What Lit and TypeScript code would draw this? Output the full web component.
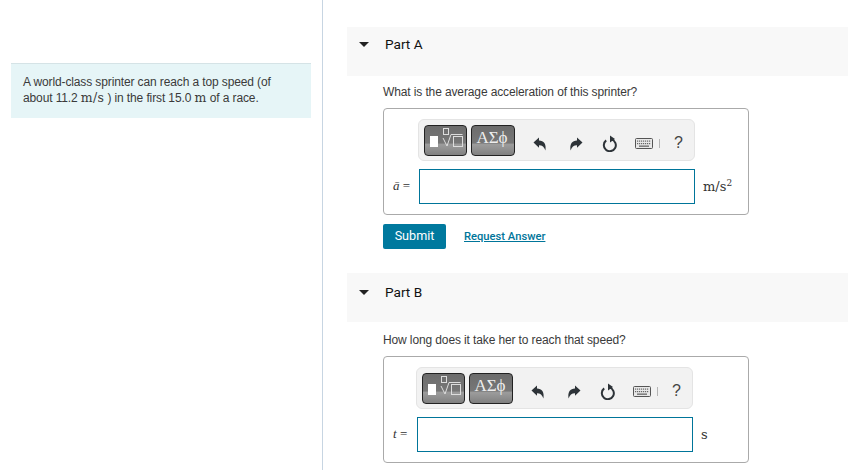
import { LitElement, css, html, svg } from "lit";
import { customElement, property } from "lit/decorators.js";

const undoPath = "M0.5 5.5 L6 0.5 L6 3.4 C10.8 3.4 13.6 7 12.4 13.5 C11.2 9.8 9.4 8.2 6 8.2 L6 10.8 Z";

@customElement("answer-box")
export class AnswerBox extends LitElement {
  @property({ type: Number }) labelWidth = 26;

  static styles = css`
    :host { display: block; }
    .box {
      width: 366px;
      height: 107px;
      box-sizing: border-box;
      border: 1px solid #aaa;
      border-radius: 4px;
      padding: 10px 0 0 9px;
    }
    .bar {
      width: 277px;
      height: 42px;
      box-sizing: border-box;
      background: #f2f2f2;
      border: 1px solid #e4e4e4;
      border-radius: 6px;
      display: flex;
      align-items: center;
      padding: 0 0 0 5px;
    }
    .tpl {
      width: 43px;
      height: 31px;
      box-sizing: border-box;
      margin-right: 4px;
      border: 1px solid #222;
      border-radius: 4px;
      background: linear-gradient(#6c6c6c, #777 58%, #9c9c9c 64%, #808080 100%);
      color: #eee;
      font: 17px "Liberation Serif", serif;
      display: flex;
      align-items: center;
      justify-content: center;
      padding: 0 2px 5px 0;
    }
    .tpl.math { padding: 0; align-items: flex-start; }
    .tpl.greek { width: 44px; }
    .tpl svg { display: block; }
    .tool { display: flex; align-items: center; justify-content: center; margin-top: 7px; }
    .undo { width: 15px; margin-left: 13px; }
    .redo { width: 15px; margin-left: 21px; }
    .reset { width: 16px; margin-left: 19px; }
    .keys { width: 18px; margin-left: 17px; }
    .sep { width: 1px; height: 9px; background: #b5b5b5; margin: 7px 0 0 6px; }
    .help {
      margin: 5px 0 0 14px;
      font: 16px "Liberation Sans", sans-serif;
      color: #444;
    }
    .row {
      display: flex;
      align-items: center;
      margin-top: 8px;
      height: 35px;
    }
    .label {
      flex: none;
      padding-bottom: 1px;
      font: 13px "Liberation Serif", serif;
      color: #333;
      white-space: nowrap;
    }
    .input {
      width: 276px;
      height: 35px;
      box-sizing: border-box;
      border: 1px solid #00759a;
      background: #fff;
    }
    .unit {
      margin-left: 8px;
      font: 13px "DejaVu Serif", serif;
      color: #333;
    }
  `;

  private renderIcon(name: string) {
    if (name === "undo") {
      return html`<svg width="14" height="14" viewBox="0 0 14 14"><path d="${undoPath}" fill="#2d3338"/></svg>`;
    }
    if (name === "redo") {
      return html`<svg width="14" height="14" viewBox="0 0 14 14"><g transform="translate(14 0) scale(-1 1)"><path d="${undoPath}" fill="#2d3338"/></g></svg>`;
    }
    if (name === "reset") {
      return html`<svg width="16" height="17" viewBox="0 0 16 17">
        <path d="M4.2 5.4 A6 6 0 1 0 9.4 4.4" fill="none" stroke="#2d3338" stroke-width="2"/>
        <path d="M8 0.5 L13 4 L8 7.5 Z" fill="#2d3338"/>
      </svg>`;
    }
    return html`<svg width="18" height="11" viewBox="0 0 18 11">
      <rect x="0.5" y="0.5" width="17" height="10" rx="1" fill="#e8e8e8" stroke="#555"/>
      ${[2, 4, 6, 8, 10, 12, 14].map((x) => svg`<rect x="${x}" y="2.5" width="1.2" height="1.2" fill="#666"/><rect x="${x}" y="5" width="1.2" height="1.2" fill="#666"/>`)}
      <rect x="4" y="7.5" width="10" height="1.3" fill="#666"/>
    </svg>`;
  }

  render() {
    const indent = this.labelWidth - 1;
    return html`
      <div class="box">
        <div class="bar" style="margin-left: ${indent}px">
          <div class="tpl math">
            <svg width="41" height="29" viewBox="0 0 41 29">
              <rect x="5" y="10" width="8" height="11" fill="#fff"/>
              <rect x="18.5" y="2.5" width="5" height="6" fill="none" stroke="#ddd"/>
              <path d="M18 12 L22 20 L26 8.5 H37.5" fill="none" stroke="#ddd"/>
              <rect x="28.5" y="10.5" width="9" height="10" fill="none" stroke="#ddd"/>
            </svg>
          </div>
          <div class="tpl greek">ΑΣϕ</div>
          <div class="tool undo">${this.renderIcon("undo")}</div>
          <div class="tool redo">${this.renderIcon("redo")}</div>
          <div class="tool reset">${this.renderIcon("reset")}</div>
          <div class="tool keys">${this.renderIcon("keys")}</div>
          <div class="sep"></div>
          <div class="help">?</div>
        </div>
        <div class="row">
          <div class="label" style="width: ${this.labelWidth}px"><slot name="label"></slot></div>
          <div class="input"></div>
          <div class="unit"><slot name="unit"></slot></div>
        </div>
      </div>
    `;
  }
}

@customElement("app-root")
export class AppRoot extends LitElement {
  static styles = css`
    :host {
      display: flex;
      height: 470px;
      overflow: hidden;
      background: #fff;
      font-family: "Liberation Sans", Arial, sans-serif;
      color: #333;
    }
    .left {
      width: 323px;
      height: 470px;
      flex: none;
      box-sizing: border-box;
      border-right: 1px solid #c7d5e2;
      padding-top: 63px;
    }
    .info {
      width: 300px;
      height: 55px;
      margin-left: 11px;
      box-sizing: border-box;
      background: #e6f5f7;
      border-top: 1px solid #d5e3e6;
      padding: 10px 12px;
      font-size: 12px;
      line-height: 16px;
      letter-spacing: -0.12px;
      color: #3a3a3a;
    }
    .m { font: 12.5px "DejaVu Serif", serif; letter-spacing: 0.3px; }
    .right { flex: 1; padding: 27px 0 0 24px; min-width: 0; }
    .head {
      height: 49px;
      background: #f8f8f8;
      display: flex;
      align-items: flex-start;
      padding: 10px 0 0 12px;
      box-sizing: border-box;
      font: 13.6px Roboto, sans-serif;
      color: #111;
    }
    .head.b { padding-top: 12px; }
    .head .tri {
      width: 0;
      height: 0;
      margin: 5px 16px 0 0;
      border-left: 5px solid transparent;
      border-right: 5px solid transparent;
      border-top: 5px solid #222;
    }
    .head span { line-height: 15px; }
    .body { padding: 8px 0 0 36px; }
    .body.b { padding-top: 10px; }
    .q { font-size: 12px; line-height: 16px; margin: 0 0 8px; letter-spacing: -0.12px; color: #3a3a3a; }
    .actions { display: flex; align-items: center; margin: 9px 0 24px; }
    .submit {
      width: 63px;
      height: 25px;
      box-sizing: border-box;
      padding-bottom: 2px;
      background: #00799e;
      color: #fff;
      border-radius: 2px;
      font: 12.6px Roboto, sans-serif;
      display: flex;
      align-items: center;
      justify-content: center;
    }
    .link {
      margin-left: 18px;
      font: 500 11.2px Roboto, sans-serif;
      color: #00759a;
      text-decoration: underline;
    }
    i.v { font: italic 13px "Liberation Serif", serif; }
    sup { font-size: 9px; line-height: 0; }
  `;

  render() {
    return html`
      <div class="left">
        <div class="info">
          A world-class sprinter can reach a top speed (of about 11.2 <span class="m">m/s</span> ) in the first 15.0 <span class="m">m</span> of a race.
        </div>
      </div>
      <div class="right">
        <div class="head"><div class="tri"></div><span>Part A</span></div>
        <div class="body">
          <p class="q">What is the average acceleration of this sprinter?</p>
          <answer-box .labelWidth=${26}>
            <span slot="label"><i class="v">ā</i> =</span>
            <span slot="unit">m/s<sup>2</sup></span>
          </answer-box>
          <div class="actions">
            <div class="submit">Submit</div>
            <a class="link">Request Answer</a>
          </div>
        </div>
        <div class="head b"><div class="tri"></div><span>Part B</span></div>
        <div class="body b">
          <p class="q">How long does it take her to reach that speed?</p>
          <answer-box .labelWidth=${24}>
            <span slot="label"><i class="v">t</i> =</span>
            <span slot="unit">s</span>
          </answer-box>
        </div>
      </div>
    `;
  }
}
